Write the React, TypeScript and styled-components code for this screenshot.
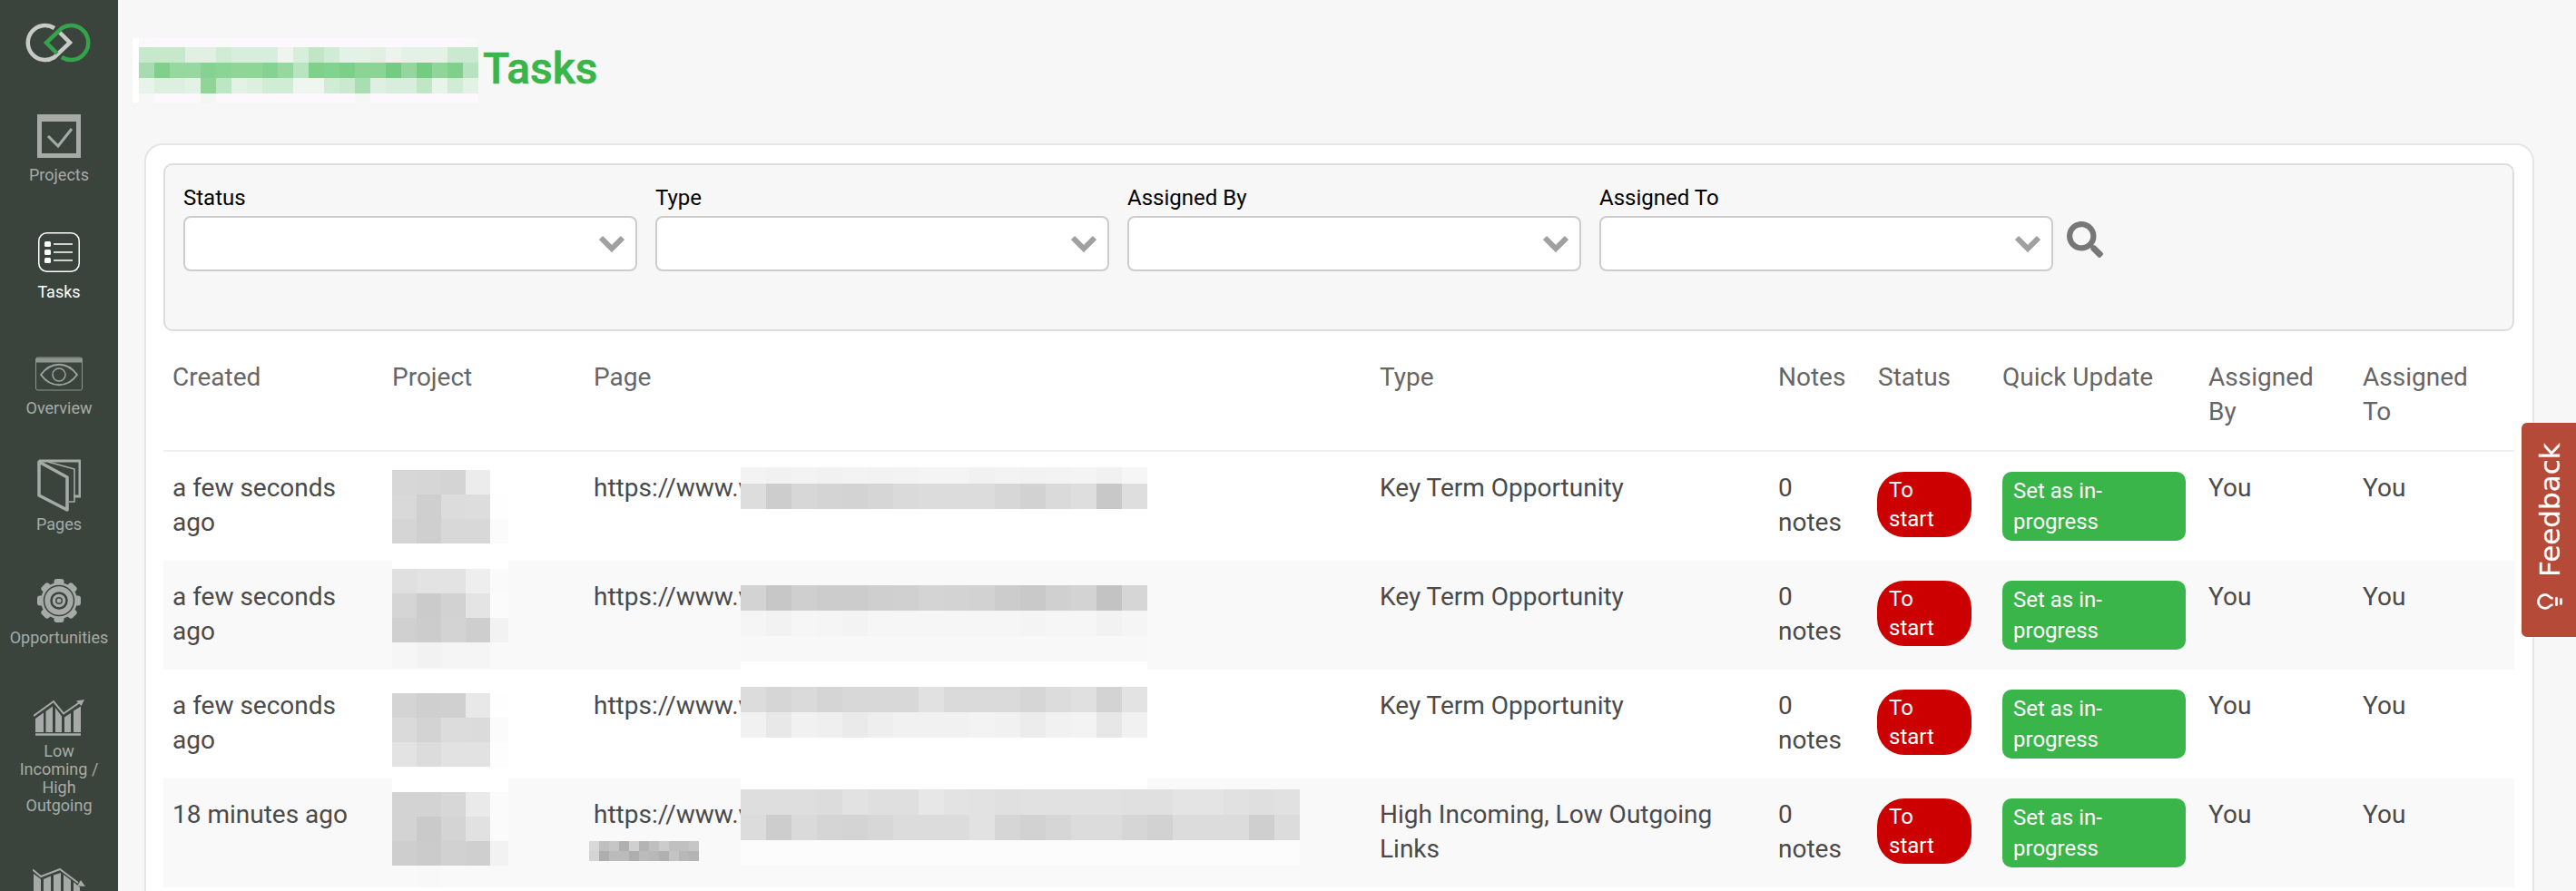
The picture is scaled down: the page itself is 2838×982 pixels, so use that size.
import { FaSearch } from "react-icons/fa";
import { Lightbulb } from "lucide-react";
import styled, { createGlobalStyle } from "styled-components";

const GlobalStyle = createGlobalStyle`
  html, body {
    margin: 0;
    height: 100%;
    overflow: hidden;
    background: #f7f7f7;
    font-family: Roboto, "Liberation Sans", sans-serif;
  }
`;

// redacted areas of the screenshot, one grey level per tile
const g = (s: string) => s.split(" ").map((v) => (v.length === 2 ? `#${v}${v}${v}` : `#${v}`));

interface IMosaicRow {
  h: number;
  tiles: string[];
}

interface IMosaic {
  tile: number;
  rows: IMosaicRow[];
  width: number;
}

const Mosaic = ({ tile, rows, width }: IMosaic) => {
  let y = 0;
  const height = rows.reduce((sum, r) => sum + r.h, 0);
  return (
    <svg width={width} height={height} shapeRendering="crispEdges" style={{ display: "block" }}>
      {rows.map((r, i) => {
        const top = y;
        y += r.h;
        return r.tiles.map((c, j) => (
          <rect key={`${i}-${j}`} x={j * tile} y={top} width={tile} height={r.h} fill={c} />
        ));
      })}
    </svg>
  );
};

const nameRows: IMosaicRow[] = [
  { h: 10, tiles: g("f9f9f9 fdf8fd fdf8fd fdf8fd fdf8fd fafafa fdf8fd fdf8fd fdf8fd fdf8fd fafafa fdf8fd fdf8fd fdf8fd fdf8fd fafafa fdf8fd fdf8fd fdf8fd fdf8fd fdf8fd f9f9f9") },
  { h: 17, tiles: g("c8e8cc c8e8cc c8e8cc e2f0e4 e2f0e4 d0ecd4 d8eedc d8eedc d8eedc eef5ef d8eedc c0e6c6 d0ecd4 e2f2e6 e4f2e6 e2f0e4 ecf4ed e4f2e6 e4f2e6 e4f2e6 cbe8d0 cbe8d0") },
  { h: 17, tiles: g("a8dcb0 80d08c 96d89f 96d89f 86d292 8ad494 8ed596 8ed596 86d292 96d8a0 b8e4c0 80d08c 84d290 7ccf88 8cd496 8cd496 74cc82 94d69e 74cc82 90d69a 80d08c b8e2c0") },
  { h: 17, tiles: g("e8f3ea ddf0e0 ddf0e0 e2f2e4 8ed596 bce6c4 e4f2e6 ddf0e0 d0ecd4 d0ecd4 eef6ef eef6ef d0ecd4 cbe9d0 a8dfb2 dff0e2 d8eedc d8eedc c0e6c6 e8f4ea d0ecd4 e4f2e6") },
  { h: 10, tiles: g("f7f7f7 fdf8fd fdf8fd fdf8fd f3f7f3 fdf8fd fdf8fd fdf8fd fdf8fd fdf8fd fdf8fd fdf8fd fdf8fd fdf8fd f5f7f5 fdf8fd fdf8fd fdf8fd fdf8fd fdf8fd fdf8fd fdf8fd") },
];

const W4 = g("ff ff ff ff ff");

const tasks = [
  {
    created: "a few seconds ago",
    type: "Key Term Opportunity",
    projectTop: 20,
    project: [
      { h: 27, tiles: g("d7 d6 d4 ec ff") },
      { h: 27, tiles: g("d9 cf dc dd fe") },
      { h: 27, tiles: g("d5 cf d8 d8 fb") },
      { h: 28, tiles: W4 },
    ],
    pageTop: 17,
    pageCols: 16,
    page: [
      { h: 18, tiles: g("f3 f1 f3 f1 f3 f2 f3 f4 f4 f1 f3 f2 f3 f4 f1 f6") },
      { h: 28, tiles: g("dd cd d7 d4 d3 d6 da dc dc dc d7 d2 da de c8 de") },
    ],
  },
  {
    created: "a few seconds ago",
    type: "Key Term Opportunity",
    projectTop: 9,
    project: [
      { h: 27, tiles: g("e0 e3 e3 ee fa") },
      { h: 27, tiles: g("d5 cb d2 e4 fb") },
      { h: 27, tiles: g("d0 cc d3 ce f2") },
      { h: 28, tiles: g("f6 f2 f5 f5 f9") },
    ],
    pageTop: 27,
    pageCols: 16,
    page: [
      { h: 28, tiles: g("d3 c7 cf cc cc cf d0 d4 d3 d2 cc c9 d0 d3 c3 d6") },
      { h: 28, tiles: g("f5 f2 f6 f5 f3 f6 f6 f6 f6 f6 f6 f4 f6 f6 f2 f5") },
      { h: 28, tiles: g("f8 f8 f8 f8 f8 f8 f8 f8 f8 f8 f8 f8 f8 f8 f8 f8") },
      { h: 28, tiles: g("ff ff ff ff ff ff ff ff ff ff ff ff ff ff ff ff") },
    ],
  },
  {
    created: "a few seconds ago",
    type: "Key Term Opportunity",
    projectTop: 26,
    project: [
      { h: 27, tiles: g("d4 cf d0 e8 fe") },
      { h: 27, tiles: g("da d3 dc db fb") },
      { h: 27, tiles: g("e3 dc e2 e2 fd") },
      { h: 28, tiles: W4 },
    ],
    pageTop: 19,
    pageCols: 16,
    page: [
      { h: 28, tiles: g("dc d6 da d5 d8 d8 d8 e1 da da da d6 dc e0 d3 e3") },
      { h: 28, tiles: g("f1 e8 f1 ef ea ee f1 f1 f1 f3 f1 ec f1 f3 e7 f1") },
      { h: 28, tiles: g("ff ff ff ff ff ff ff ff ff ff ff ff ff ff ff ff") },
      { h: 29, tiles: g("ff ff ff ff ff ff ff ff ff ff ff ff ff ff ff ff ff ff ff ff ff ff") },
    ],
  },
  {
    created: "18 minutes ago",
    type: "High Incoming, Low Outgoing Links",
    projectTop: 15,
    project: [
      { h: 27, tiles: g("d3 d3 d7 ea fb") },
      { h: 27, tiles: g("d3 ca d4 e1 fb") },
      { h: 27, tiles: g("ce cb d1 cf f2") },
      { h: 24, tiles: g("f9 f8 f9 f9 f9") },
    ],
    pageTop: 12,
    pageCols: 22,
    page: [
      { h: 28, tiles: g("de de de dc e2 df df e7 e3 e2 e0 e1 e1 e1 e1 e0 e0 e4 e4 e1 df e1") },
      { h: 28, tiles: g("dc cd da d5 d4 d7 dc dc dc e2 d6 d2 d6 dc dc d6 d2 dc dc dc cf dc") },
      { h: 28, tiles: g("fc fc fc fc fc fc fc fc fc fc fc fc fc fc fc fc fc fc fc fc fc fc") },
    ],
  },
];

const navItems = [
  { label: "Projects", icon: <ProjectsIcon />, gap: 9, pb: 43 },
  { label: "Tasks", icon: <TasksIcon />, gap: 12, pb: 42, active: true },
  { label: "Overview", icon: <OverviewIcon />, gap: 9, pb: 42 },
  { label: "Pages", icon: <PagesIcon />, gap: 4, pb: 39 },
  { label: "Opportunities", icon: <GearIcon />, gap: 7, pb: 39 },
  { label: "Low Incoming / High Outgoing", icon: <LowIcon />, gap: 7, pb: 46 },
  { label: "", icon: <HighIcon />, gap: 7, pb: 0 },
];

const fields = ["Status", "Type", "Assigned By", "Assigned To"];
const columns = ["Created", "Project", "Page", "Type", "Notes", "Status", "Quick Update", "Assigned By", "Assigned To"];
const widths = [242, 222, 866, 439, 110, 137, 227, 170, 177];

function Logo() {
  return (
    <LogoMark width="130" height="94" viewBox="0 0 130 94" fill="none" strokeWidth="4.5">
      <path d="M60 31A19 19 0 1 0 60 63L77 47L65 35" stroke="#c8cac7" />
      <path d="M63 59L51 47L68 31A19 19 0 1 1 68 63" stroke="#35a349" />
    </LogoMark>
  );
}

function ProjectsIcon() {
  return (
    <svg width="48" height="48" viewBox="0 0 48 48" fill="none" stroke="#a6aba7">
      <path d="M2.5 6V45.5H45.5V6" strokeWidth="5" />
      <path d="M0 4H48" strokeWidth="8" />
      <path d="M12 24L23 35L38 16" strokeWidth="3" />
    </svg>
  );
}

function TasksIcon() {
  return (
    <svg width="46" height="44" viewBox="0 0 46 44" fill="none" stroke="#fff">
      <rect x="0.75" y="0.75" width="44.5" height="42.5" rx="9" strokeWidth="1.5" />
      <rect x="7" y="10" width="7" height="6" rx="1.5" fill="#fff" stroke="none" />
      <rect x="7" y="19" width="7" height="6" rx="1.5" fill="#fff" stroke="none" />
      <rect x="7" y="28" width="7" height="6" rx="1.5" fill="#fff" stroke="none" />
      <path d="M17 13H38M17 22H38M17 31H38" strokeWidth="1.6" />
    </svg>
  );
}

function OverviewIcon() {
  return (
    <svg width="52" height="38" viewBox="0 0 52 38" fill="none" stroke="#9da29e">
      <rect x="0.5" y="1" width="51" height="36" rx="2" stroke="#8f958f" />
      <path d="M1 4H51" strokeWidth="5" stroke="#8f958f" />
      <path d="M6 20C17 5 35 5 46 20C35 35 17 35 6 20Z" strokeWidth="2" />
      <circle cx="26" cy="20" r="7" strokeWidth="1.5" />
    </svg>
  );
}

function PagesIcon() {
  return (
    <svg width="48" height="58" viewBox="0 0 48 58" fill="none" stroke="#a6aba7" strokeLinejoin="round">
      <path d="M2 2H47V41H40" strokeWidth="3" />
      <path d="M2 3L33 20V56L2 40Z" strokeWidth="3.5" />
      <path d="M12 3L41 11V47H35" strokeWidth="1.6" />
    </svg>
  );
}

function GearIcon() {
  return (
    <svg width="48" height="48" viewBox="0 0 48 48">
      <g fill="#a6aba7">
        {[0, 45, 90, 135].map((a) => (
          <rect key={a} x="18.5" y="0" width="11" height="48" rx="3" transform={`rotate(${a} 24 24)`} />
        ))}
        <circle cx="24" cy="24" r="20" />
      </g>
      <circle cx="24" cy="24" r="16.5" fill="none" stroke="#3b443c" strokeWidth="1.5" />
      <circle cx="24" cy="24" r="8.5" fill="none" stroke="#3b443c" strokeWidth="2.5" />
      <circle cx="24" cy="24" r="4" fill="#3b443c" />
      <circle cx="24" cy="24" r="2.5" fill="#a6aba7" />
    </svg>
  );
}

function LowIcon() {
  return (
    <svg width="56" height="40" viewBox="0 0 56 40" fill="none">
      <path d="M0 18L22 2L33 15.5L51 3" stroke="#a6aba7" strokeWidth="2" />
      <path d="M56 0L47 1.5L52.5 7Z" fill="#a6aba7" />
      <path d="M2 36H11V14.5L2 21ZM13.5 36H21V7.5L13.5 13ZM24 36H31V18.5L24 9ZM34 36H41V15L34 19.5ZM44 36H52V7.5L44 12.5Z" fill="#a6aba7" />
      <path d="M2 38.5H52" stroke="#a6aba7" strokeWidth="2.5" />
    </svg>
  );
}

function HighIcon() {
  return (
    <svg width="58" height="46" viewBox="0 0 58 46" fill="none">
      <path d="M0 1.5L9 9L30 1L50 16" stroke="#a6aba7" strokeWidth="2" />
      <path d="M58 20L49 19.5L53 13Z" fill="#a6aba7" />
      <path d="M1 6V46H9V12ZM12 12V46H20V8.5ZM23 7.5V46H31V5ZM34 7V46H42V13ZM45 15V46H52V21Z" fill="#a6aba7" />
    </svg>
  );
}

const Chevron = () => (
  <svg width="28" height="20" viewBox="0 0 28 20" fill="none" stroke="#a0a0a0" strokeWidth="6">
    <path d="M2 3L14 15L26 3" />
  </svg>
);

const App = () => {
  return (
    <Page>
      <GlobalStyle />
      <Sidebar>
        <Logo />
        {navItems.map((item) => (
          <NavItem key={item.label} $pb={item.pb}>
            <NavIcon $gap={item.gap}>{item.icon}</NavIcon>
            {item.label && <NavLabel $active={item.active}>{item.label}</NavLabel>}
          </NavItem>
        ))}
      </Sidebar>
      <Main>
        <Heading>
          <HeadingName>
            <Mosaic tile={17} rows={nameRows} width={374} />
          </HeadingName>
          <Title>Tasks</Title>
        </Heading>
        <Card>
          <Filters>
            {fields.map((field) => (
              <Field key={field}>
                <FieldLabel>{field}</FieldLabel>
                <Select>
                  <Chevron />
                </Select>
              </Field>
            ))}
            <SearchButton>
              <FaSearch size={40} />
            </SearchButton>
          </Filters>
          <Table>
            <colgroup>
              {widths.map((w, i) => (
                <col key={i} width={w} />
              ))}
            </colgroup>
            <thead>
              <tr>
                {columns.map((c) => (
                  <Th key={c}>{c}</Th>
                ))}
              </tr>
            </thead>
            <tbody>
              {tasks.map((task, i) => (
                <Row key={i} $striped={i % 2 === 1}>
                  <Td>{task.created}</Td>
                  <Td>
                    <Cover $top={task.projectTop} $left={10}>
                      <Mosaic tile={27} rows={task.project} width={128} />
                    </Cover>
                  </Td>
                  <Td>
                    <Url>https://www.v</Url>
                    <Cover $top={task.pageTop} $left={172}>
                      <Mosaic tile={28} rows={task.page} width={task.pageCols * 28} />
                    </Cover>
                    {i === 3 && (
                      <Cover $top={69} $left={5}>
                        <Mosaic
                          tile={11}
                          width={121}
                          rows={[
                            { h: 11, tiles: g("d8 bf c6 b0 d0 b4 c0 cc c0 c0 c6") },
                            { h: 11, tiles: g("d4 ae bb bb ae bb b8 b0 c4 b8 b4") },
                          ]}
                        />
                      </Cover>
                    )}
                  </Td>
                  <Td>{task.type}</Td>
                  <Td>0 notes</Td>
                  <Td>
                    <StatusBadge>To start</StatusBadge>
                  </Td>
                  <Td>
                    <UpdateButton>Set as in-progress</UpdateButton>
                  </Td>
                  <Td>You</Td>
                  <Td>You</Td>
                </Row>
              ))}
            </tbody>
          </Table>
        </Card>
      </Main>
      <FeedbackTab>
        <BulbIcon>
          <Lightbulb size={30} strokeWidth={2.2} />
        </BulbIcon>
        Feedback
      </FeedbackTab>
    </Page>
  );
};

const Page = styled.div`
  display: flex;
  width: 2838px;
  height: 982px;
  overflow: hidden;
`;

const Sidebar = styled.nav`
  flex: 0 0 130px;
  display: flex;
  flex-direction: column;
  align-items: center;
  background-color: #3b443c;
  overflow: hidden;
`;

const LogoMark = styled.svg`
  display: block;
  flex: none;
`;

const NavItem = styled.a<{ $pb: number }>`
  flex: none;
  display: flex;
  flex-direction: column;
  align-items: center;
  width: 100%;
  padding-bottom: ${({ $pb }) => $pb}px;
  &:first-of-type {
    margin-top: 23px;
  }
`;

const NavIcon = styled.div<{ $gap: number }>`
  height: 66px;
  display: flex;
  align-items: flex-end;
  padding-bottom: ${({ $gap }) => $gap}px;
  box-sizing: border-box;
  svg {
    display: block;
    flex: none;
  }
`;

const NavLabel = styled.span<{ $active?: boolean }>`
  font-size: 18px;
  line-height: 20px;
  text-align: center;
  width: 110px;
  color: ${({ $active }) => ($active ? "#fff" : "#a6aba7")};
`;

const Main = styled.main`
  flex: 1;
  min-width: 0;
  padding: 0 46px 0 29px;
`;

const Heading = styled.header`
  height: 158px;
  box-sizing: border-box;
  padding-top: 42px;
  display: flex;
  align-items: flex-start;
`;

const HeadingName = styled.div`
  margin-left: -13px;
  border-left: 7px solid #fff;
  height: 71px;
`;

const Title = styled.h1`
  margin: 6px 0 0 5px;
  font-size: 48px;
  line-height: 56px;
  font-weight: 500;
  -webkit-text-stroke: 0.6px #39b54a;
  color: #39b54a;
`;

const Card = styled.section`
  box-sizing: border-box;
  height: 900px;
  padding: 20px 20px 0 19px;
  background: #fff;
  border: 2px solid #e6e6e6;
  border-radius: 20px;
`;

const Filters = styled.div`
  box-sizing: border-box;
  height: 185px;
  display: flex;
  align-items: flex-start;
  gap: 20px;
  padding: 22px 20px 0;
  background: #f7f7f7;
  border: 2px solid #ddd;
  border-radius: 10px;
`;

const Field = styled.div`
  width: 500px;
`;

const FieldLabel = styled.div`
  font-size: 24px;
  line-height: 28px;
  height: 34px;
  color: #000;
`;

const Select = styled.div`
  box-sizing: border-box;
  height: 61px;
  display: flex;
  align-items: center;
  justify-content: flex-end;
  padding-right: 12px;
  background: #fff;
  border: 2px solid #ccc;
  border-radius: 8px;
`;

const SearchButton = styled.div`
  margin: 40px 0 0 -5px;
  color: #777;
  line-height: 0;
`;

const Table = styled.table`
  width: 2590px;
  margin-top: 10px;
  table-layout: fixed;
  border-collapse: collapse;
  font-size: 28px;
  line-height: 38px;
`;

const Th = styled.th`
  padding: 22px 24px 23px 10px;
  text-align: left;
  font-weight: 400;
  color: #666;
  vertical-align: top;
  border-bottom: 2px solid #f0f0f0;
`;

const Row = styled.tr<{ $striped: boolean }>`
  background: ${({ $striped }) => ($striped ? "#f9f9f9" : "#fff")};
`;

const Td = styled.td`
  position: relative;
  height: 120px;
  box-sizing: border-box;
  padding: 21px 10px 22px;
  vertical-align: top;
  color: #4a4a4a;
`;

const Url = styled.div`
  white-space: nowrap;
`;

const Cover = styled.div<{ $top: number; $left: number }>`
  position: absolute;
  top: ${({ $top }) => $top}px;
  left: ${({ $left }) => $left}px;
`;

const StatusBadge = styled.span`
  display: block;
  box-sizing: border-box;
  width: 104px;
  height: 72px;
  margin: 1px 0 0 -1px;
  padding: 4px 13px;
  font-size: 24px;
  line-height: 32px;
  color: #fff;
  background: #cc0000;
  border-radius: 30px;
`;

const UpdateButton = styled.button`
  display: block;
  box-sizing: border-box;
  width: 202px;
  height: 76px;
  margin: 1px 0 0;
  padding: 4px 12px;
  font-family: inherit;
  font-size: 24px;
  line-height: 34px;
  text-align: left;
  color: #fff;
  background: #39b54a;
  border: 0;
  border-radius: 10px;
`;

const FeedbackTab = styled.div`
  position: fixed;
  top: 466px;
  right: 0;
  box-sizing: border-box;
  width: 60px;
  height: 236px;
  display: flex;
  align-items: center;
  gap: 12px;
  padding-inline-start: 24px;
  padding-block-start: 3px;
  writing-mode: vertical-rl;
  transform: rotate(180deg);
  font-family: "DejaVu Sans", sans-serif;
  font-size: 31px;
  -webkit-text-stroke: 0.3px #fff;
  color: #fff;
  background: #b64a38;
  border-radius: 0 6px 6px 0;
`;

const BulbIcon = styled.span`
  display: flex;
  transform: rotate(90deg);
`;

export default App;
